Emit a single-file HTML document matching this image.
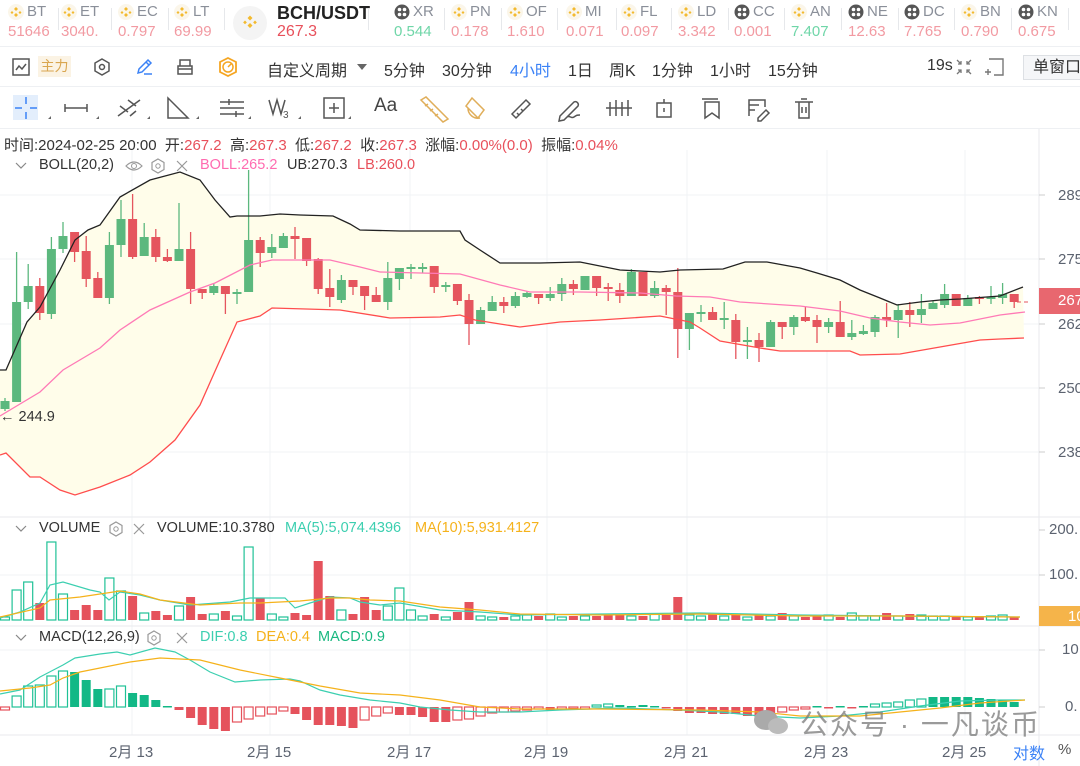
<!DOCTYPE html>
<html><head><meta charset="utf-8">
<style>
*{margin:0;padding:0;box-sizing:border-box}
body{width:1080px;height:766px;overflow:hidden;background:#fff;font-family:"Liberation Sans","Noto Sans CJK SC",sans-serif;color:#333;position:relative}
.a{position:absolute;white-space:nowrap}
.tk{position:absolute;top:0;height:46px;overflow:hidden}
.tk .n{position:absolute;top:3px;font-size:15px;color:#8a8f99}
.tk .v{position:absolute;top:23px;font-size:15px;color:#f29aa2}
.sep{position:absolute;top:8px;width:1px;height:22px;background:#e6e8eb}
.t2{position:absolute;top:57px;font-size:16px;color:#333}
.h{position:absolute;white-space:nowrap;font-size:14.5px}
</style></head><body>
<div id="tick"></div>
<div class="a" style="left:0;top:46px;width:1080px;height:1px;background:#eef0f3"></div>
<div class="a" style="left:0;top:86px;width:1080px;height:1px;background:#eef0f3"></div>
<div class="a" style="left:0;top:128px;width:1080px;height:1px;background:#eef0f3"></div>

<svg class="a" style="left:12px;top:58px" width="18" height="18" viewBox="0 0 18 18"><rect x="1" y="1" width="16" height="16" fill="none" stroke="#555" stroke-width="1.5"/><path d="M4 12l3-4 3 3 4-5" fill="none" stroke="#555" stroke-width="1.5"/></svg>
<div class="a" style="left:38px;top:56px;width:33px;height:21px;background:#fbf3e4;color:#d9a650;font-size:14px;line-height:21px;text-align:center">主力</div>
<svg class="a" style="left:92px;top:57px" width="20" height="20" viewBox="0 0 20 20"><path d="M10 2l7 4v8l-7 4-7-4V6z" fill="none" stroke="#555" stroke-width="1.5"/><circle cx="10" cy="10" r="2.5" fill="none" stroke="#555" stroke-width="1.5"/></svg>
<svg class="a" style="left:134px;top:57px" width="20" height="20" viewBox="0 0 20 20"><path d="M4 16l1-4 9-9 3 3-9 9z M12 5l3 3 M10 17h8" fill="none" stroke="#3b82f6" stroke-width="1.5"/></svg>
<svg class="a" style="left:175px;top:57px" width="20" height="20" viewBox="0 0 20 20"><path d="M5 9V3h10v6 M3 9h14v8H3z M3 12h14" fill="none" stroke="#555" stroke-width="1.5"/></svg>
<svg class="a" style="left:217px;top:56px" width="22" height="22" viewBox="0 0 22 22"><path d="M11 2l8 4v10l-8 4-8-4V6z" fill="none" stroke="#f5a623" stroke-width="1.8"/><circle cx="11" cy="11" r="5" fill="none" stroke="#f5a623" stroke-width="1.5"/><path d="M11 11l3-3" stroke="#f5a623" stroke-width="1.5"/></svg>
<div class="t2" style="left:267px">自定义周期</div>
<div class="a" style="left:357px;top:64px;width:0;height:0;border-left:5px solid transparent;border-right:5px solid transparent;border-top:6px solid #666"></div>
<div class="t2" style="left:384px">5分钟</div>
<div class="t2" style="left:442px">30分钟</div>
<div class="t2" style="left:510px;color:#3b82f6">4小时</div>
<div class="t2" style="left:568px">1日</div>
<div class="t2" style="left:609px">周K</div>
<div class="t2" style="left:652px">1分钟</div>
<div class="t2" style="left:710px">1小时</div>
<div class="t2" style="left:768px">15分钟</div>
<div class="t2" style="left:927px">19s</div>
<svg class="a" style="left:955px;top:58px" width="18" height="18" viewBox="0 0 18 18"><path d="M2 2l4 4M6 3v3H3 M16 2l-4 4M12 3v3h3 M2 16l4-4M3 12h3v3 M16 16l-4-4M15 12h-3v3" fill="none" stroke="#777" stroke-width="1.3"/></svg>
<svg class="a" style="left:985px;top:58px" width="20" height="18" viewBox="0 0 20 18"><path d="M4 1h14v16H9 M3 11v6 M0 14h6" fill="none" stroke="#777" stroke-width="1.4"/></svg>
<div class="a" style="left:1023px;top:55px;width:60px;height:25px;background:#f5f6f8;border:1px solid #dde0e4;font-size:16px;line-height:23px;padding-left:9px">单窗口</div>

<div class="a" style="left:13px;top:95px;width:25px;height:25px;background:#e3eefc"></div>
<svg class="a" style="left:0;top:92px" width="820" height="32" viewBox="0 0 820 32" fill="none" stroke="#555" stroke-width="1.5">
<path d="M15 16h7M30 16h7M26 5v7M26 20v7" stroke="#3b82f6"/>
<path d="M65 16h22M65 12v8M87 12v8"/>
<path d="M118 24l22-16M120 14l8 6M128 8l8 6M130 24l6-5"/>
<path d="M168 6v20h20z"/>
<path d="M220 10h24M220 16h24M220 22h24M229 7v6M236 19v6"/>
<path d="M269 8l4 14 4-14 4 14 4-14"/><text x="283" y="26" font-size="10" fill="#555" stroke="none">3</text>
<rect x="324" y="6" width="20" height="20"/><path d="M334 11v10M329 16h10"/>
<path d="M421 8l5-3 22 22-5 3zM425 14l3-2M430 19l3-2M435 24l3-2" stroke="#e0ae5a"/>
<path d="M472 6l12 12-6 8-12-12z M468 16a10 10 0 0 0 12 10" stroke="#e0ae5a"/>
<path d="M512 22l14-14 4 4-14 14zM517 21l2 2M521 17l2 2" />
<path d="M560 24l14-14a3 3 0 0 1 4 4l-14 14-5 1zM567 25c3-2 4 2 7 0s3-2 6-2"/>
<path d="M610 10v14M616 8v16M622 10v14M628 8v16M606 16h26"/>
<rect x="657" y="11" width="14" height="14"/><path d="M664 7v4M664 16v4"/>
<path d="M702 7h16M705 10h14v16l-7-5-7 5z"/>
<path d="M749 24V8h16v7M749 13h10M749 18h6M758 26l8-8 3 3-8 8h-3z"/>
<path d="M795 10h18M799 10v16h10V10M801 7h6M802 15v6M806 15v6"/>
<path d="M48 27h3v-3z M96 27h3v-3z M147 27h3v-3z M196 27h3v-3z M248 27h3v-3z M298 27h3v-3z M348 27h3v-3z" fill="#666" stroke="none"/>
</svg>
<div class="a" style="left:374px;top:95px;font-size:19px;color:#444">Aa</div>

<div class="a" style="left:4px;top:134px;font-size:15px;color:#333">时间:2024-02-25 20:00 &nbsp;开:<span style="color:#e8505b">267.2</span> &nbsp;高:<span style="color:#e8505b">267.3</span> &nbsp;低:<span style="color:#e8505b">267.2</span> &nbsp;收:<span style="color:#e8505b">267.3</span> &nbsp;涨幅:<span style="color:#e8505b">0.00%(0.0)</span> &nbsp;振幅:<span style="color:#e8505b">0.04%</span></div>

<svg id="chart" class="a" style="left:0;top:129px" width="1080" height="637"></svg>

<div class="h" style="left:39px;top:157px;color:#333">BOLL(20,2)</div>
<div class="h" style="left:200px;top:157px;color:#ff6bb0">BOLL:265.2</div>
<div class="h" style="left:287px;top:157px;color:#333">UB:270.3</div>
<div class="h" style="left:357px;top:157px;color:#e8505b">LB:260.0</div>
<div class="h" style="left:39px;top:520px;color:#333">VOLUME</div>
<div class="h" style="left:157px;top:520px;color:#333">VOLUME:10.3780</div>
<div class="h" style="left:285px;top:520px;color:#3ccfb0">MA(5):5,074.4396</div>
<div class="h" style="left:415px;top:520px;color:#f5b21b">MA(10):5,931.4127</div>
<div class="h" style="left:39px;top:629px;color:#333">MACD(12,26,9)</div>
<div class="h" style="left:200px;top:629px;color:#3ccfb0">DIF:0.8</div>
<div class="h" style="left:256px;top:629px;color:#f5b21b">DEA:0.4</div>
<div class="h" style="left:318px;top:629px;color:#19b880">MACD:0.9</div>
<div class="h" style="left:0;top:409px;color:#333">← 244.9</div>

<div class="a" style="left:1058px;top:187px;font-size:15px;color:#5c6370">289</div>
<div class="a" style="left:1058px;top:251px;font-size:15px;color:#5c6370">275</div>
<div class="a" style="left:1058px;top:316px;font-size:15px;color:#5c6370">262</div>
<div class="a" style="left:1058px;top:380px;font-size:15px;color:#5c6370">250</div>
<div class="a" style="left:1058px;top:444px;font-size:15px;color:#5c6370">238</div>
<div class="a" style="left:1039px;top:288px;width:41px;height:26px;background:#e8676f"></div>
<div class="a" style="left:1058px;top:292px;font-size:15px;color:#fff">267</div>
<div class="a" style="left:1049px;top:521px;font-size:15px;color:#5c6370">200.</div>
<div class="a" style="left:1049px;top:566px;font-size:15px;color:#5c6370">100.</div>
<div class="a" style="left:1039px;top:606px;width:41px;height:20px;background:#f5b44a"></div>
<div class="a" style="left:1068px;top:608px;font-size:15px;color:#fff">10</div>
<div class="a" style="left:1062px;top:641px;font-size:15px;color:#5c6370">10</div>
<div class="a" style="left:1065px;top:698px;font-size:15px;color:#5c6370">0.</div>

<div class="a" style="left:109px;top:741px;font-size:15px;color:#5c6370">2月 13</div>
<div class="a" style="left:247px;top:741px;font-size:15px;color:#5c6370">2月 15</div>
<div class="a" style="left:387px;top:741px;font-size:15px;color:#5c6370">2月 17</div>
<div class="a" style="left:524px;top:741px;font-size:15px;color:#5c6370">2月 19</div>
<div class="a" style="left:664px;top:741px;font-size:15px;color:#5c6370">2月 21</div>
<div class="a" style="left:804px;top:741px;font-size:15px;color:#5c6370">2月 23</div>
<div class="a" style="left:942px;top:741px;font-size:15px;color:#5c6370">2月 25</div>
<div class="a" style="left:1013px;top:740px;font-size:16px;color:#3b82f6">对数</div>
<div class="a" style="left:1058px;top:741px;font-size:15px;color:#555">%</div>

<svg class="a" style="left:752px;top:708px" width="40" height="30" viewBox="0 0 40 30"><ellipse cx="14" cy="12" rx="12" ry="10" fill="#aaa"/><ellipse cx="26" cy="18" rx="10" ry="8" fill="#bbb"/></svg>
<div class="a" style="left:800px;top:703px;font-size:28px;letter-spacing:2px;color:rgba(120,120,120,0.75)">公众号 · 一凡谈币</div>

<script>
(function(){
var items=[["BT","51646",12,"b"],["ET","3040.",65,"b"],["EC","0.797",122,"b"],["LT","69.99",178,"b"],
["XR","0.544",398,"x","#6fd6a8"],["PN","0.178",455,"b"],["OF","1.610",511,"b"],["MI","0.071",570,"b"],["FL","0.097",625,"b"],["LD","3.342",682,"b"],["CC","0.001",738,"x"],["AN","7.407",795,"b","#6fd6a8"],["NE","12.63",852,"x"],["DC","7.765",908,"x"],["BN","0.790",965,"b"],["KN","0.675",1022,"x"]];
var h="";
items.forEach(function(it){
 var x=it[2];
 var icon=it[3]=="b"?'<svg style="position:absolute;left:0;top:4px" width="16" height="16" viewBox="0 0 16 16"><circle cx="8" cy="8" r="8" fill="#fbf6ea"/><path d="M8 3l2 2-2 2-2-2zM4 7l1.5 1.5L4 10 2.5 8.5zM12 7l1.5 1.5L12 10l-1.5-1.5zM8 9l2 2-2 2-2-2z" fill="#f3ba2f"/></svg>':'<svg style="position:absolute;left:0;top:4px" width="16" height="16" viewBox="0 0 16 16"><circle cx="8" cy="8" r="7.5" fill="#555"/><circle cx="5.5" cy="5.5" r="1.8" fill="#fff"/><circle cx="10.5" cy="5.5" r="1.8" fill="#fff"/><circle cx="5.5" cy="10.5" r="1.8" fill="#fff"/><circle cx="10.5" cy="10.5" r="1.8" fill="#fff"/></svg>';
 h+='<div class="tk" style="left:'+(x-4)+'px;width:46px">'+icon+'<div class="n" style="left:19px">'+it[0]+'</div><div class="v" style="left:0;'+(it[4]?'color:'+it[4]:'')+'">'+it[1]+'</div></div>';
 h+='<div class="sep" style="left:'+(x+46)+'px"></div>';
});
h+='<div style="position:absolute;left:233px;top:6px;width:34px;height:34px;border-radius:50%;background:#f4f4f4"></div><svg style="position:absolute;left:240px;top:13px" width="20" height="20" viewBox="0 0 16 16"><path d="M8 2l2 2-2 2-2-2zM4 6l1.5 1.5L4 9 2.5 7.5zM12 6l1.5 1.5L12 9l-1.5-1.5zM8 8l2 2-2 2-2-2z" fill="#f3ba2f"/></svg>';
h+='<div style="position:absolute;left:277px;top:3px;font-size:18px;font-weight:bold;color:#222">BCH/USDT</div><div style="position:absolute;left:277px;top:23px;font-size:16px;color:#e8505b">267.3</div><div class="sep" style="left:368px"></div>';
document.getElementById('tick').innerHTML=h;
})();

var O=129,s='';
function P(pts){return pts.map(function(p){return p[0]+','+(p[1]-O)}).join(' ');}
[195,259,324,388,452,575,650].forEach(function(y){s+='<line x1="0" x2="1039" y1="'+(y-O)+'" y2="'+(y-O)+'" stroke="#f1f3f6"/>';});
[132,270,410,547,687,827,965].forEach(function(x){s+='<line x1="'+x+'" x2="'+x+'" y1="'+(150-O)+'" y2="'+(735-O)+'" stroke="#f1f3f6"/>';});
s+='<line x1="0" x2="1080" y1="'+(517-O)+'" y2="'+(517-O)+'" stroke="#e8eaed"/>';
s+='<line x1="0" x2="1080" y1="'+(626-O)+'" y2="'+(626-O)+'" stroke="#e8eaed"/>';
s+='<line x1="0" x2="1080" y1="'+(735-O)+'" y2="'+(735-O)+'" stroke="#e8eaed"/>';
s+='<line x1="1039" x2="1039" y1="0" y2="637" stroke="#e8eaed"/>';
[195,259,324,388,452,530,575,650,707].forEach(function(y){s+='<line x1="1039" x2="1045" y1="'+(y-O)+'" y2="'+(y-O)+'" stroke="#ccc"/>';});
var up=[[0,370],[6,370],[27,322],[40,307],[60,270],[75,240],[88,230],[100,225],[120,197],[150,180],[180,172],[200,180],[215,200],[230,217],[237,216],[260,216],[280,214],[300,215],[333,216],[350,224],[360,230],[400,231],[460,231],[465,240],[480,250],[500,263],[540,263],[580,262],[620,270],[660,272],[680,270],[723,269],[745,262],[767,262],[800,268],[817,273],[840,280],[860,290],[880,298],[897,305],[920,302],[940,300],[960,299],[1000,296],[1023,287]];
var mid=[[0,416],[40,392],[63,370],[100,348],[120,330],[150,310],[190,292],[215,283],[250,265],[272,260],[330,260],[360,267],[380,272],[460,274],[500,285],[530,292],[580,292],[640,293],[676,296],[710,297],[740,302],[800,306],[840,311],[870,318],[900,322],[930,325],[960,323],[1000,315],[1025,312]];
var lo=[[0,455],[6,453],[30,477],[40,477],[60,490],[75,495],[100,487],[130,475],[150,462],[175,440],[200,405],[220,360],[237,322],[260,316],[272,308],[340,310],[390,318],[440,317],[460,315],[475,320],[500,324],[520,327],[560,322],[600,320],[660,316],[690,322],[700,328],[720,341],[760,348],[780,351],[850,351],[860,355],[900,354],[940,347],[980,340],[1000,339],[1024,338]];
s+='<polygon points="'+P(up)+' '+P(lo.slice().reverse())+'" fill="#fffdea"/>';
var G='#5cb87e',R='#e5555e';
var C=[[401,409,398,411,G],[302,402,252,402,G],[286,302,264,309,G],[286,313,278,320,R],[249,314,237,319,G],[236,249,222,253,G],[232,252,232,262,R],[251,279,236,287,R],[278,298,272,298,R],[245,298,232,304,G],[219,245,200,257,G],[219,257,194,259,R],[237,256,223,256,G],[237,257,229,262,R],[257,261,249,262,R],[249,261,203,261,G],[249,289,232,304,R],[289,293,289,299,R],[286,293,283,295,G],[286,294,286,314,R],[292,294,289,304,G],[240,292,170,292,G],[240,253,237,267,R],[247,253,234,258,G],[236,248,233,248,G],[236,239,227,259,R],[238,261,238,266,R],[259,289,258,294,R],[288,297,269,307,R],[280,300,275,303,G],
[280,287,280,295,R],[286,296,286,310,R],[295,302,287,302,R],[278,302,262,310,G],[268,279,268,290,G],[267,269,264,279,G],[267,269,263,273,G],[266,287,266,293,R],[285,287,282,292,G],[284,301,284,305,R],[300,324,294,345,R],[310,324,307,324,G],[302,311,296,311,G],[302,306,297,313,R],[296,306,292,308,G],[293,297,291,298,G],[294,298,294,304,R],[294,298,287,301,G],[284,294,278,301,G],[284,289,280,295,R],[276,290,276,290,G],[276,288,276,296,R],[287,289,283,301,R],[290,296,283,303,R],[272,296,269,296,G],[272,296,272,296,R],[288,296,281,298,G],[288,292,285,315,R],[292,329,268,358,R],
[313,329,313,350,G],[312,314,305,322,G],[312,320,307,320,R],[318,320,302,329,G],[320,342,314,359,R],[340,342,327,359,G],[340,347,333,362,R],[322,347,320,347,G],[322,327,322,339,R],[317,327,315,335,G],[317,321,307,322,R],[320,327,315,343,R],[322,327,318,333,G],[322,337,301,337,R],[333,337,320,340,G],[331,334,325,335,G],[317,332,315,337,G],[317,320,303,327,R],[310,320,304,338,G],[310,315,302,327,R],[309,315,294,323,G],[303,309,301,309,G],[294,305,284,308,G],[294,306,294,306,R],[298,306,295,306,G],[297,299,296,304,R],[297,299,286,304,G],[294,298,283,304,G],[294,302,294,308,R]];
C.forEach(function(c,i){var x=5+11.6*i;
 s+='<line x1="'+x+'" x2="'+x+'" y1="'+(c[2]-O)+'" y2="'+(c[3]-O)+'" stroke="'+c[4]+'" stroke-width="1.3"/>';
 var h=Math.max(c[1]-c[0],2);
 s+='<rect x="'+(x-4.5)+'" y="'+(c[0]-O)+'" width="9" height="'+h+'" fill="'+c[4]+'"/>';});
s+='<line x1="1017" x2="1030" y1="'+(302-O)+'" y2="'+(302-O)+'" stroke="'+R+'" stroke-dasharray="4 3"/>';
s+='<polyline points="'+P(up)+'" fill="none" stroke="#222" stroke-width="1.3"/>';
s+='<polyline points="'+P(mid)+'" fill="none" stroke="#ff7ab6" stroke-width="1.3"/>';
s+='<polyline points="'+P(lo)+'" fill="none" stroke="#ff4d4d" stroke-width="1.3"/>';
var VT=[617,590,582,603,542,594,610,605,610,578,591,596,613,611,615,606,597,614,614,611,616,547,598,614,617,613,615,561,596,610,614,597,610,606,588,610,616,614,617,612,602,616,617,617,616,615,616,614,617,616,616,616,614,615,616,616,614,615,597,615,616,614,616,615,617,615,616,613,616,617,616,615,617,613,616,616,613,616,614,615,616,616,616,617,616,616,615,617];
VT.forEach(function(t,i){var x=5+11.6*i;var c=C[i]?C[i][4]:G;var h=620-t;
 if(c==G) s+='<rect x="'+(x-4.5)+'" y="'+(t-O)+'" width="9" height="'+h+'" fill="none" stroke="#1fc196" stroke-width="1.2"/>';
 else s+='<rect x="'+(x-4.5)+'" y="'+(t-O)+'" width="9" height="'+h+'" fill="#e5525c"/>';});
var ma5=[[0,618],[20,612],[40,603],[50,585],[63,582],[90,590],[100,592],[109,600],[120,592],[140,595],[160,600],[190,605],[230,602],[250,598],[285,598],[295,608],[310,603],[330,597],[350,598],[360,602],[380,605],[400,603],[440,610],[480,612],[520,615],[600,614],[700,613],[800,615],[900,616],[1020,617]];
var ma10=[[0,617],[40,608],[50,600],[80,597],[120,591],[140,594],[160,600],[200,605],[240,603],[260,603],[300,601],[330,598],[350,598],[370,600],[400,601],[440,607],[480,610],[520,614],[600,615],[700,614],[800,616],[900,616],[1020,617]];
s+='<polyline points="'+P(ma5)+'" fill="none" stroke="#3ccfb0" stroke-width="1.2"/>';
s+='<polyline points="'+P(ma10)+'" fill="none" stroke="#f5b21b" stroke-width="1.2"/>';
var M=[[710,0],[696,0],[686,0],[685,0],[676,0],[671,0],[672,1],[680,1],[689,1],[689,0],[686,0],[693,1],[695,1],[700,1],[706,1],[710,1],[718,1],[725,1],[729,1],[731,1],[722,0],[719,0],[716,0],[714,0],[711,0],[714,1],[720,1],[725,1],[725,1],[726,1],[728,1],[720,0],[716,0],[713,0],[715,1],[715,1],[717,1],[722,1],[722,1],[720,0],[719,0],[716,0],[713,0],[712,0],[711,0],[710,0],[709,0],[710,1],[709,0],[708,0],[709,0],[705,0],[704,0],[705,1],[706,1],[705,1],[706,1],[708,1],[711,1],[713,1],[713,1],[714,1],[714,1],[714,1],[716,1],[717,1],[718,1],[712,0],[710,0],[709,0],[706,1],[708,1],[706,1],[708,1],[706,1],[704,0],[703,0],[702,0],[700,0],[699,0],[697,1],[697,1],[697,1],[697,1],[698,1],[699,1],[700,1],[702,1]];
M.forEach(function(m,i){var x=5+11.6*i;var v=m[0];var pos=v<707;var y=Math.min(v,707),h=Math.max(Math.abs(v-707),1.5);
 var col=pos?(m[1]?'#12b886':'#1fc196'):'#e5525c';
 if(m[1]) s+='<rect x="'+(x-4.5)+'" y="'+(y-O)+'" width="9" height="'+h+'" fill="'+col+'"/>';
 else s+='<rect x="'+(x-4.5)+'" y="'+(y-O)+'" width="9" height="'+h+'" fill="none" stroke="'+col+'" stroke-width="1.2"/>';});
var dif=[[0,694],[20,690],[40,677],[63,665],[75,658],[100,654],[117,652],[130,655],[155,648],[175,652],[190,660],[210,672],[235,682],[260,680],[290,679],[300,681],[320,690],[340,695],[370,700],[400,703],[420,707],[450,710],[480,712],[520,712],[560,710],[620,708],[680,710],[720,712],[760,716],[800,718],[840,716],[880,712],[920,706],[960,701],[1000,700],[1025,700]];
var dea=[[0,691],[30,688],[50,685],[63,678],[80,672],[100,668],[130,662],[160,658],[200,660],[240,670],[280,678],[320,686],[360,693],[400,695],[440,700],[480,707],[520,709],[600,709],[700,710],[760,712],[800,716],[860,716],[900,712],[940,708],[980,703],[1025,700]];
s+='<polyline points="'+P(dif)+'" fill="none" stroke="#3ccfb0" stroke-width="1.2"/>';
s+='<polyline points="'+P(dea)+'" fill="none" stroke="#f5b21b" stroke-width="1.2"/>';
function hdr(y,eye,gx,xx){var t='<path d="M16 '+(y-3-O)+'l5 5 5-5" fill="none" stroke="#888" stroke-width="1.2"/>';
 if(eye) t+='<path d="M126 '+(y-O)+'q8-8 16 0q-8 8-16 0z" fill="none" stroke="#999" stroke-width="1.2"/><circle cx="134" cy="'+(y-O)+'" r="2.5" fill="none" stroke="#999"/>';
 t+='<path d="M'+gx+' '+(y-7-O)+'l6 3.5v7l-6 3.5-6-3.5v-7z" fill="none" stroke="#999" stroke-width="1.2"/><circle cx="'+gx+'" cy="'+(y-O)+'" r="2.2" fill="none" stroke="#999"/>';
 t+='<path d="M'+(xx-5)+' '+(y-5-O)+'l10 10M'+(xx+5)+' '+(y-5-O)+'l-10 10" stroke="#999" stroke-width="1.2"/>';return t;}
s+=hdr(166,true,158,182)+hdr(529,false,116,139)+hdr(638,false,154,182);
document.getElementById('chart').innerHTML=s;
</script>
</body></html>
